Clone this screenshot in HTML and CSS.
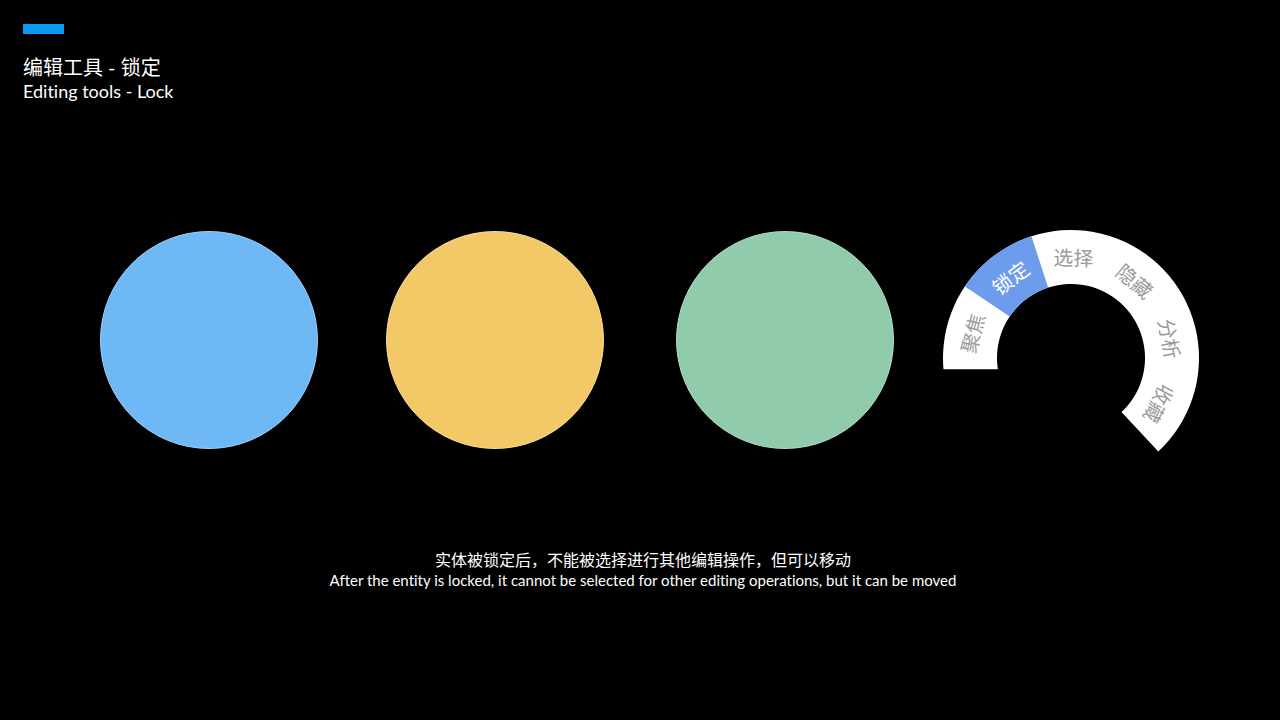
FILE: index.html
```html
<!DOCTYPE html>
<html lang="zh">
<head>
<meta charset="utf-8">
<title>编辑工具 - 锁定</title>
<link rel="stylesheet" href="styles.css">
</head>
<body>
<header class="header">
  <div class="bar"></div>
  <div class="title-cn">编辑工具 - 锁定</div>
  <div class="title-en">Editing tools - Lock</div>
</header>
<section class="stage">
  <div class="circle circle-blue"></div>
  <div class="circle circle-yellow"></div>
  <div class="circle circle-green"></div>
  <svg class="ring" width="270" height="236" viewBox="0 0 270 236">
    <path class="seg-white" d="M 7.49 147.16 A 128 128 0 1 1 222.3 229.62 L 185.47 190.12 A 74 74 0 1 0 61.85 147.16 Z"/>
    <path class="seg-blue" d="M 28.9 64.42 A 128 128 0 0 1 95.45 14.26 L 112.13 65.62 A 74 74 0 0 0 73.65 94.62 Z"/>
    <text class="lbl" x="36" y="111" transform="rotate(-75.5 36 111)">聚焦</text>
    <text class="lbl lbl-active" x="74.2" y="55.3" transform="rotate(-37 74.2 55.3)">锁定</text>
    <text class="lbl" x="137.5" y="35" transform="rotate(1.4 137.5 35)">选择</text>
    <text class="lbl" x="199" y="58.7" transform="rotate(40.1 199 58.7)">隐藏</text>
    <text class="lbl" x="234.1" y="116.6" transform="rotate(78.9 234.1 116.6)">分析</text>
    <text class="lbl" x="223.5" y="182" transform="rotate(117.6 223.5 182)">收藏</text>
  </svg>
</section>
<section class="caption">
  <div class="cap-cn">实体被锁定后，不能被选择进行其他编辑操作，但可以移动</div>
  <div class="cap-en">After the entity is locked, it cannot be selected for other editing operations, but it can be moved</div>
</section>
</body>
</html>
```
FILE: styles.css
```css
html, body {
  margin: 0;
  padding: 0;
  background: #000;
}
body {
  width: 1280px;
  height: 720px;
  overflow: hidden;
  color: #fff;
  font-family: "Lato", "Noto Sans CJK SC", sans-serif;
  font-variant-ligatures: none;
}
.header {
  padding: 24px 0 0 23px;
}
.bar {
  width: 41px;
  height: 10px;
  background: #0a9bf0;
  margin-bottom: 21px;
}
.title-cn {
  font-size: 20px;
  line-height: 24px;
}
.title-en {
  font-size: 18px;
  line-height: 24px;
}
.stage {
  display: flex;
  align-items: center;
  margin-top: 119px;
  padding-left: 100px;
  height: 236px;
}
.circle {
  width: 218px;
  height: 218px;
  border-radius: 50%;
  box-sizing: border-box;
  flex: none;
}
.circle-blue {
  background: #6db8f5;
  border: 1px solid #9fd0f7;
}
.circle-yellow {
  background: #f2c966;
  border: 1px solid #f8dd98;
  margin-left: 68px;
}
.circle-green {
  background: #90cbab;
  border: 1px solid #b5dcc6;
  margin-left: 72px;
}
.ring {
  flex: none;
  margin-left: 42px;
  display: block;
}
.seg-white {
  fill: #ffffff;
}
.seg-blue {
  fill: #6c9ceb;
}
.lbl {
  font-family: "Noto Sans CJK SC", sans-serif;
  font-size: 20px;
  fill: #9a9a9a;
  text-anchor: middle;
  dominant-baseline: central;
}
.lbl-active {
  fill: #ffffff;
}
.caption {
  margin-top: 92px;
  text-align: center;
  padding-left: 6px;
}
.cap-cn {
  font-size: 16px;
  line-height: 20px;
}
.cap-en {
  font-size: 15px;
  line-height: 20px;
}
```
